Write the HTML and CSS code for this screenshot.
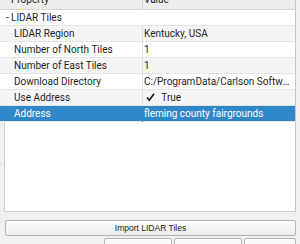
FILE: index.html
```html
<!DOCTYPE html>
<html>
  <head>
    <meta name="viewport" content="width=device-width,initial-scale=1.0">
    <title>LIDAR Tiles</title>
    <link rel="stylesheet" href="styles.css">
  </head>
  <body>
    <div class="panel">
      <div class="grid">
        <div class="head">
          <div class="cell name"><span>Property</span></div>
          <div class="cell value"><span>Value</span></div>
        </div>
        <div class="row group">
          <span class="toggle">-</span><span>LIDAR Tiles</span>
        </div>
        <div class="row alt">
          <div class="cell name">LIDAR Region</div>
          <div class="cell value">Kentucky, USA</div>
        </div>
        <div class="row">
          <div class="cell name">Number of North Tiles</div>
          <div class="cell value">1</div>
        </div>
        <div class="row alt">
          <div class="cell name">Number of East Tiles</div>
          <div class="cell value">1</div>
        </div>
        <div class="row">
          <div class="cell name">Download Directory</div>
          <div class="cell value">C:/ProgramData/Carlson Software/LIDAR/Tiles</div>
        </div>
        <div class="row alt">
          <div class="cell name">Use Address</div>
          <div class="cell value">
            <svg class="check" width="11" height="11" viewBox="0 0 11 11">
              <path d="M2 5.5 L4.3 8.3 L9 1.8" fill="none" stroke="#111" stroke-width="1.5"/>
            </svg>
            True
          </div>
        </div>
        <div class="row selected">
          <div class="cell name">Address</div>
          <div class="cell value">fleming county fairgrounds</div>
        </div>
        <div class="empty">
          <div class="grip"></div>
          <div class="blank"></div>
        </div>
      </div>
      <button class="btn wide">Import LIDAR Tiles</button>
      <div class="actions">
        <button class="btn small"></button>
        <button class="btn small"></button>
        <button class="btn last"></button>
      </div>
    </div>
  </body>
</html>
```

FILE: styles.css
```css
body {
  margin: 0;
  background: #f0f0f0;
  font-family: Roboto, "Noto Sans", sans-serif;
  font-size: 10px;
  color: #1e1e1e;
}

.panel {
  width: 300px;
  height: 244px;
  overflow: hidden;
  display: flex;
  flex-direction: column;
}
.panel > * { flex-shrink: 0; }

.grid {
  width: 296px;
  height: 212px;
  display: flex;
  flex-direction: column;
  border-right: 1px solid #c6c6c6;
  box-sizing: border-box;
}
.grid > * { flex-shrink: 0; }

.head {
  height: 9px;
  display: flex;
  background: #ececec;
  border-bottom: 1px solid #d6d6d6;
  overflow: hidden;
}
.head .cell span { display: block; margin-top: -8px; line-height: 16px; }
.head .name { border-right: 1px solid #d6d6d6; }

.row {
  height: 16px;
  display: flex;
  align-items: center;
  background: #fff;
  border-bottom: 1px solid #e4e4e4;
  box-sizing: border-box;
  padding-left: 5px;
}
.row.alt { background: #f5f5f5; }
.row.group { padding-left: 6px; }
.toggle { width: 5px; }

.cell {
  white-space: nowrap;
  overflow: hidden;
  text-overflow: ellipsis;
  box-sizing: border-box;
}
.cell.name { width: 138px; padding-left: 9px; }
.head .cell.name { width: 143px; padding-left: 11px; }
.cell.value { flex: 1; padding: 0 1px 0 1px; }
.row .cell.name { border-right: 1px solid #e0e0e0; height: 16px; line-height: 15px; }
.row .cell.value { display: block; height: 16px; line-height: 15px; }
.check { vertical-align: -2px; margin: 0 3px 0 1px; }

.row.selected { background: #3088c9; color: #fff; }
.row.selected .cell.name { border-right-color: #3088c9; }

.empty {
  flex: 1 1 auto !important;
  display: flex;
}
.grip {
  width: 4px;
  background: radial-gradient(circle, #b9b9b9 0.6px, transparent 0.8px) 0 40px / 3px 3px no-repeat,
              #f0f0f0;
  background-size: 3px 3px;
}
.blank {
  flex: 1;
  background: #fff;
  border-left: 1px solid #cfcfcf;
  border-bottom: 1px solid #cfcfcf;
}

.btn {
  font-family: "Liberation Sans", Arial, sans-serif;
  font-size: 8.5px;
  color: #222;
  background: linear-gradient(#fcfcfc, #ececec);
  border: 1px solid #b4b4b4;
  border-radius: 2px;
  padding: 0;
}
.wide {
  margin: 8px 4px 0 5px;
  height: 16px;
  width: 291px;
}
.actions {
  display: flex;
  gap: 2px;
  padding: 2px 4px 0 104px;
}
.actions .btn { height: 14px; }
.small { width: 68px; }
.last { width: 52px; }
```
